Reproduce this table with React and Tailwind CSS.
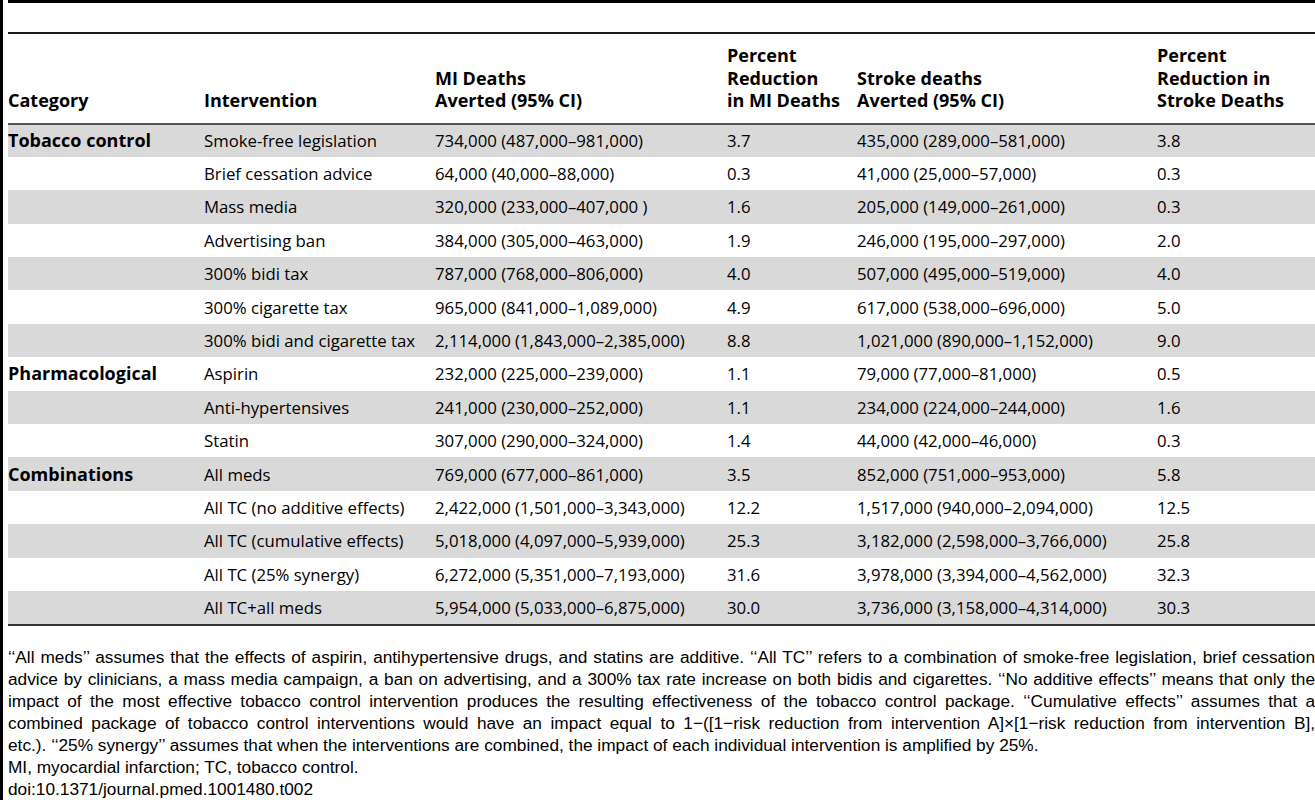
const rows = [
  { cat: 'Tobacco control', iv: 'Smoke-free legislation', mi: '734,000 (487,000–981,000)', mip: '3.7', st: '435,000 (289,000–581,000)', stp: '3.8' },
  { cat: '', iv: 'Brief cessation advice', mi: '64,000 (40,000–88,000)', mip: '0.3', st: '41,000 (25,000–57,000)', stp: '0.3' },
  { cat: '', iv: 'Mass media', mi: '320,000 (233,000–407,000 )', mip: '1.6', st: '205,000 (149,000–261,000)', stp: '0.3' },
  { cat: '', iv: 'Advertising ban', mi: '384,000 (305,000–463,000)', mip: '1.9', st: '246,000 (195,000–297,000)', stp: '2.0' },
  { cat: '', iv: '300% bidi tax', mi: '787,000 (768,000–806,000)', mip: '4.0', st: '507,000 (495,000–519,000)', stp: '4.0' },
  { cat: '', iv: '300% cigarette tax', mi: '965,000 (841,000–1,089,000)', mip: '4.9', st: '617,000 (538,000–696,000)', stp: '5.0' },
  { cat: '', iv: '300% bidi and cigarette tax', mi: '2,114,000 (1,843,000–2,385,000)', mip: '8.8', st: '1,021,000 (890,000–1,152,000)', stp: '9.0' },
  { cat: 'Pharmacological', iv: 'Aspirin', mi: '232,000 (225,000–239,000)', mip: '1.1', st: '79,000 (77,000–81,000)', stp: '0.5' },
  { cat: '', iv: 'Anti-hypertensives', mi: '241,000 (230,000–252,000)', mip: '1.1', st: '234,000 (224,000–244,000)', stp: '1.6' },
  { cat: '', iv: 'Statin', mi: '307,000 (290,000–324,000)', mip: '1.4', st: '44,000 (42,000–46,000)', stp: '0.3' },
  { cat: 'Combinations', iv: 'All meds', mi: '769,000 (677,000–861,000)', mip: '3.5', st: '852,000 (751,000–953,000)', stp: '5.8' },
  { cat: '', iv: 'All TC (no additive effects)', mi: '2,422,000 (1,501,000–3,343,000)', mip: '12.2', st: '1,517,000 (940,000–2,094,000)', stp: '12.5' },
  { cat: '', iv: 'All TC (cumulative effects)', mi: '5,018,000 (4,097,000–5,939,000)', mip: '25.3', st: '3,182,000 (2,598,000–3,766,000)', stp: '25.8' },
  { cat: '', iv: 'All TC (25% synergy)', mi: '6,272,000 (5,351,000–7,193,000)', mip: '31.6', st: '3,978,000 (3,394,000–4,562,000)', stp: '32.3' },
  { cat: '', iv: 'All TC+all meds', mi: '5,954,000 (5,033,000–6,875,000)', mip: '30.0', st: '3,736,000 (3,158,000–4,314,000)', stp: '30.3' },
];

// footnote lines are justified one by one so the breaks match the figure
const noteLines = [
  '‘‘All meds’’ assumes that the effects of aspirin, antihypertensive drugs, and statins are additive. ‘‘All TC’’ refers to a combination of smoke-free legislation, brief cessation',
  'advice by clinicians, a mass media campaign, a ban on advertising, and a 300% tax rate increase on both bidis and cigarettes. ‘‘No additive effects’’ means that only the',
  'impact of the most effective tobacco control intervention produces the resulting effectiveness of the tobacco control package. ‘‘Cumulative effects’’ assumes that a',
  'combined package of tobacco control interventions would have an impact equal to 1−([1−risk reduction from intervention A]×[1−risk reduction from intervention B],',
];

const App = () => {
  return (
    <div className="h-[800px] bg-white border-l-[3px] border-black pl-[5px] text-black overflow-hidden">
      <div className="border-t-[3px] border-black h-[32px]" />
      <div className="border-t-2 border-[#1a1a1a]">
        <table className="w-full table-fixed border-collapse font-['Open_Sans',sans-serif] text-[16.75px]">
          <colgroup>
            <col className="w-[196px]" />
            <col className="w-[231px]" />
            <col className="w-[292px]" />
            <col className="w-[130px]" />
            <col className="w-[300px]" />
            <col />
          </colgroup>
          <thead>
            <tr className="border-b-2 border-[#555] text-[18px] leading-[22.5px] align-bottom">
              <th className="text-left font-bold pt-[10px] pb-[11px]">Category</th>
              <th className="text-left font-bold pt-[10px] pb-[11px]">Intervention</th>
              <th className="text-left font-bold pt-[10px] pb-[11px]">MI Deaths<br />Averted (95% CI)</th>
              <th className="text-left font-bold pt-[10px] pb-[11px] whitespace-nowrap">Percent<br />Reduction<br />in MI Deaths</th>
              <th className="text-left font-bold pt-[10px] pb-[11px]">Stroke deaths<br />Averted (95% CI)</th>
              <th className="text-left font-bold pt-[10px] pb-[11px] whitespace-nowrap">Percent<br />Reduction in<br />Stroke Deaths</th>
            </tr>
          </thead>
          <tbody>
            {rows.map((r, i) => (
              <tr key={i} className={`h-[33.4px] ${i % 2 === 0 ? 'bg-[#d9d9d9]' : 'bg-white'}`}>
                <td className="font-bold text-[18px] whitespace-nowrap">{r.cat}</td>
                <td className="whitespace-nowrap">{r.iv}</td>
                <td className="whitespace-nowrap">{r.mi}</td>
                <td>{r.mip}</td>
                <td className="whitespace-nowrap">{r.st}</td>
                <td>{r.stp}</td>
              </tr>
            ))}
          </tbody>
        </table>
        <div className="border-t-2 border-[#333]" />
      </div>

      {/* Table footnote */}
      <div className="pt-[20px] font-['Liberation_Sans',Arial,sans-serif] text-[17.25px] leading-[22px]">
        {noteLines.map((line, i) => (
          <div key={i} className="text-justify [text-align-last:justify]">{line}</div>
        ))}
        <div>etc.). ‘‘25% synergy’’ assumes that when the interventions are combined, the impact of each individual intervention is amplified by 25%.</div>
        <div>MI, myocardial infarction; TC, tobacco control.</div>
        <div>doi:10.1371/journal.pmed.1001480.t002</div>
      </div>
    </div>
  );
};

export default App;
